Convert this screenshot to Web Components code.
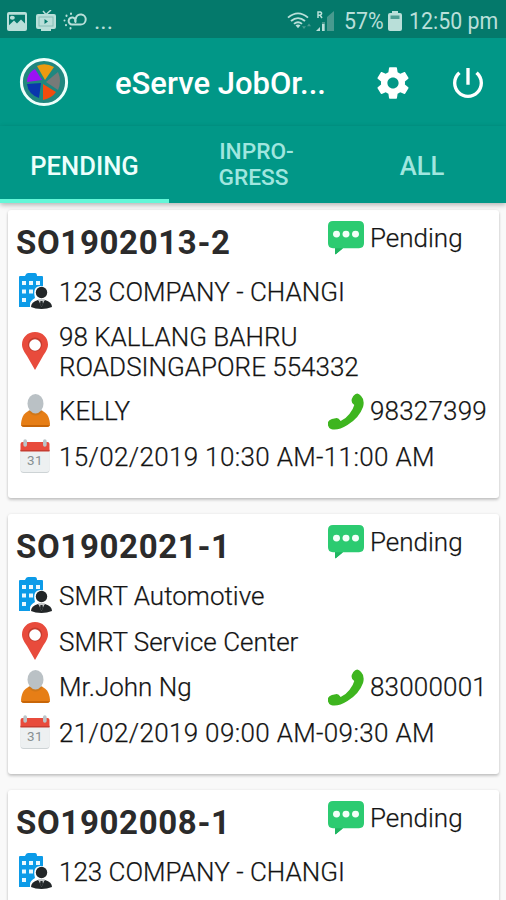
<!DOCTYPE html>
<html lang="en">
<head>
<meta charset="utf-8">
<title>eServe JobOrder</title>
<style>
html,body{margin:0;height:900px;overflow:hidden}
body{background:#f9f9f9;font-family:Roboto,"Liberation Sans",sans-serif;color:#262626}
</style>
</head>
<body>
<eserve-app></eserve-app>
<script>
const define = (name, html, setup) => customElements.define(name, class extends HTMLElement {
  connectedCallback() {
    if (this.shadowRoot) return;
    const t = document.createElement('template');
    t.innerHTML = html;
    this.attachShadow({mode: 'open'}).append(t.content.cloneNode(true));
    if (setup) setup(this);
  }
});

const ICONS = {
  picture: ['0 0 20 20', '<path fill="#b9dfd9" fill-rule="evenodd" d="M2 0H18Q20 0 20 2V18Q20 20 18 20H2Q0 20 0 18V2Q0 0 2 0ZM2 3V14L7 9L10 12L14 8L18 12V3ZM5 4A2 2 0 1 1 4.900 4Z"/><circle cx="6" cy="6" r="1.800" fill="#b9dfd9"/>'],
  tv: ['0 0 22 22', '<path d="M8 1L11 4.500L16 0" fill="none" stroke="#b9dfd9" stroke-width="1.500"/><rect x="1" y="4" width="20" height="15" rx="2" fill="#b9dfd9"/><rect x="4" y="7" width="14" height="9" fill="none" stroke="#86beb6"/><path d="M9.500 9V14L13 11.500Z" fill="#04796b"/><path d="M6 19H16V21H6Z" fill="#b9dfd9"/>'],
  weather: ['0 0 24 20', '<g fill="none" stroke="#b9dfd9" stroke-width="2" stroke-linecap="round"><path d="M9 13.500H17.500A5 5 0 1 0 12.800 7.500L12 10M9 13.500A3.500 3.500 0 1 1 12.500 11"/><path d="M8 2.500V3M3.500 4.500V5M1.500 9.500V9.600M3 14V14.200M7.500 17V17.500"/></g>'],
  wifi: ['0 0 26 20', '<g fill="none" stroke="#b9dfd9" stroke-width="1.900"><path d="M1 6Q11 -3 21 6M4 9.500Q11 3.500 18 9.500M7 12.500Q11 9 15 12.500"/></g><path d="M8.500 14L11 17L13.500 14Q11 12.300 8.500 14Z" fill="#b9dfd9"/><path d="M15 15L17 18L19 15ZM20 15L22 12L24 15Z" fill="#489a8f"/>'],
  signal: ['0 0 20 20', '<path d="M2 7V1H4.500Q7 2.500 4 4.200H2M4 4L6 7" fill="none" stroke="#b9dfd9" stroke-width="1.500"/><path d="M0 20L4 16V20Z" fill="#b9dfd9"/><path d="M6 20V11H9V20ZM11 6L18 0V20H11Z" fill="#489a8f"/><path d="M6 13H8.500V20H6Z" fill="#b9dfd9"/>'],
  battery: ['0 0 14 20', '<path d="M4 0H10V2H12Q14 2 14 4V18Q14 20 12 20H2Q0 20 0 18V4Q0 2 2 2H4Z" fill="#b9dfd9"/><path d="M2.500 4.500H11.500V8H2.500Z" fill="#4c9e93"/>'],
  logo: ['0 0 50 50', '<circle cx="25" cy="25" r="22.600" fill="#20877f" stroke="#edfffb" stroke-width="3"/><path d="M18 9Q26 5 35 10L26 23Z" fill="#ed9a11"/><path d="M16 12L23 23L8 25Q8 16 16 12Z" fill="#9b12f4"/><path d="M8 27L22 26L20 41Q9 37 8 27Z" fill="#0937ad"/><path d="M24 27L37 35Q33 41 24 43Z" fill="#f44c0e"/><path d="M27 25L39 15Q43 24 39 33Z" fill="#777a78"/>'],
  gear: ['2 1.800 20 20.400', '<path fill="#fff" d="M19.430 12.980c.04-.32.07-.64.07-.98s-.03-.66-.07-.98l2.110-1.650c.19-.15.24-.42.12-.64l-2-3.460c-.12-.22-.39-.3-.61-.22l-2.490 1c-.52-.4-1.080-.73-1.690-.98l-.38-2.650C14.460 2.180 14.250 2 14 2h-4c-.25 0-.46.18-.49.42l-.38 2.650c-.61.25-1.170.59-1.690.98l-2.490-1c-.23-.09-.49 0-.61.22l-2 3.460c-.13.22-.07.49.12.64l2.110 1.650c-.04.32-.07.65-.07.98s.03.66.07.98l-2.110 1.650c-.19.15-.24.42-.12.64l2 3.460c.12.22.39.3.61.22l2.490-1c.52.4 1.080.73 1.690.98l.38 2.650c.03.24.24.42.49.42h4c.25 0 .46-.18.49-.42l.38-2.650c.61-.25 1.170-.59 1.690-.98l2.490 1c.23.09.49 0 .61-.22l2-3.460c.12-.22.07-.49-.12-.64l-2.110-1.650zM12 15.500c-1.930 0-3.500-1.570-3.500-3.500s1.570-3.500 3.500-3.500 3.500 1.570 3.500 3.500-1.570 3.500-3.500 3.500z"/>'],
  power: ['3 3 18 18', '<path fill="#fff" d="M13 3h-2v10h2V3zm4.830 2.170l-1.420 1.420C17.990 7.860 19 9.810 19 12c0 3.870-3.130 7-7 7s-7-3.130-7-7c0-2.190 1.010-4.140 2.580-5.420L6.170 5.170C4.230 6.820 3 9.260 3 12c0 4.970 4.030 9 9 9s9-4.030 9-9c0-2.740-1.230-5.180-3.170-6.830z"/>'],
  chat: ['0 0 36 35', '<path fill="#2ccb71" d="M5 0H31Q36 0 36 5V23Q36 28 31 28H15L8 34Q7 35 7 33V28H5Q0 28 0 23V5Q0 0 5 0Z"/><path d="M7 28H15L8 34Q7 35 7 33Z" fill="#20b561"/><g fill="#f3fff8"><circle cx="8.500" cy="13.500" r="3.500"/><circle cx="18" cy="13.500" r="3.500"/><circle cx="27.500" cy="13.500" r="3.500"/></g>'],
  building: ['0 0 34 36', '<path fill="#0c9be8" d="M1 4Q1 3 2 3H7Q8 0 10 0H17Q19 0 19 3H24Q25 3 25 4V34H1Z"/><path fill="#eaf8ff" d="M4 8H8V12H4ZM11 8H15V12H11ZM18 8H22V12H18ZM4 16.500H8V20.500H4ZM11 16.500H15V20.500H11ZM4 25H8V29H4Z"/><path d="M12 36V31Q12 28 17 25Q14 13 23 13Q31 13 29 25L34 30V36Z" fill="#fff"/><circle cx="23.500" cy="19.500" r="5.700" fill="#222628"/><path d="M13 34Q13 29 20 27L23.500 30L27 27Q34 29 34 34Q29 36 23.500 36Q17 36 13 34Z" fill="#222628"/><path d="M20 26L23.500 34L27 26Z" fill="#c9cccd"/><path d="M22.500 28H24.500L25 31L23.500 34L22 31Z" fill="#222628"/>'],
  pin: ['0 0 26 38', '<path fill="#e84b3c" d="M13 0C5.500 0 0 5.500 0 12.500C0 17 3 21 5 24L13 38L21 24C23 21 26 17 26 12.500C26 5.500 20.500 0 13 0Z"/><circle cx="13" cy="12.500" r="7" fill="#c33b2d"/><circle cx="13" cy="13" r="5.800" fill="#fff"/>'],
  user: ['0 0 29 33', '<path fill="#e67e16" d="M0 30Q1 17 11 16.500H18Q28 17 29 30Q29 33 26 33H3Q0 33 0 30Z"/><path fill="#c86608" d="M0 31H29Q28 33 26 33H3Q1 33 0 31Z"/><path d="M7 17Q14.500 26 22 17Q18 15 14.500 15Q11 15 7 17Z" fill="#d07718"/><ellipse cx="14.500" cy="9.700" rx="8" ry="9.700" fill="#bac1c5"/>'],
  calendar: ['0.500 0 29 34', '<path d="M1 10H29V31Q29 34 26 34H4Q1 34 1 31Z" fill="#cdd3d5"/><path d="M1 10H29V30Q29 33 26 33H4Q1 33 1 30Z" fill="#edf0f1"/><path d="M1 12V5Q1 3 3 3H27Q29 3 29 5V12Z" fill="#e84b3c"/><path d="M1 11H29V12.500H1Z" fill="#c63c30"/><path d="M5.500 2V6M24.500 2V6" stroke="#bbc5c8" stroke-width="3.500" stroke-linecap="round"/><text x="15" y="26.500" text-anchor="middle" font-family="Roboto" font-size="13" font-weight="400" fill="#888f92">31</text>'],
  phone: ['0 0 37 37', '<path fill="#3eb51f" d="M26 3Q30 -2 34 3Q38 7 36 14Q32 25 20 32Q10 38 3 36Q-1 34 0 29Q1 27 4 26L9 25Q11 25 13 28Q18 26 22 21Q26 16 27 12Q22 9 26 3Z"/>']
};

const makeIcon = (name, width, height) => {
  const icon = document.createElement('app-icon');
  icon.setAttribute('name', name);
  icon.style.width = width + 'px';
  icon.style.height = height + 'px';
  return icon;
};

define('app-icon', '<style>:host{display:block;flex:none}svg{display:block;width:100%;height:100%}</style>', el => {
  const [box, art] = ICONS[el.getAttribute('name')];
  const holder = document.createElement('template');
  holder.innerHTML = `<svg viewBox="${box}" preserveAspectRatio="none" aria-hidden="true">${art}</svg>`;
  el.shadowRoot.append(holder.content);
});

define('status-bar', `<style>
:host{display:flex;align-items:center;height:38px;box-sizing:border-box;padding:4px 8px 0 7px;background:#04796b;color:#b9dfd9;font-size:24px;white-space:nowrap}
.more{font-size:24px;line-height:20px;margin:0 auto 0 7px}
.pct,.time{display:block;transform:scaleX(.89);transform-origin:100% 50%}
.pct{margin-left:-5px}
.time{margin-left:-4px}
</style>
<app-icon name="picture" style="width:20px;height:19px"></app-icon>
<app-icon name="tv" style="width:22px;height:22px;margin-left:8px"></app-icon>
<app-icon name="weather" style="width:24px;height:20px;margin-left:6px"></app-icon>
<span class="more">...</span>
<app-icon name="wifi" style="width:26px;height:19px"></app-icon>
<app-icon name="signal" style="width:20px;height:20px;margin:0 8px 0 3px"></app-icon>
<span class="pct">57%</span>
<app-icon name="battery" style="width:14px;height:20px;margin-left:4px"></app-icon>
<span class="time">12:50 pm</span>`);

define('app-bar', `<style>
:host{display:flex;align-items:center;height:88px;padding:0 23px 0 19px;background:#019787;box-sizing:border-box}
h1{font:500 31px/36px Roboto,sans-serif;color:#fff;margin:4px auto 0 46px;white-space:nowrap}
</style>
<app-icon name="logo" style="width:50px;height:50px"></app-icon>
<h1><slot></slot></h1>
<app-icon name="gear" style="width:32px;height:32px;margin-top:2px"></app-icon>
<app-icon name="power" style="width:30px;height:30px;margin:2px 0 0 44px"></app-icon>`);

define('tab-item', `<style>
:host{display:flex;align-items:center;justify-content:center;text-align:center;box-sizing:border-box;border-bottom:4px solid transparent;color:#a0e6df;font:500 25.600px/26px Roboto,sans-serif;padding-top:7px}
:host([small]){font-size:22.700px;padding-top:5px}
:host([active]){color:#edfffc;border-color:#64f7d8}
</style><span><slot></slot></span>`);

define('tab-strip', `<style>
:host{display:grid;grid-template-columns:169px 169px 168px;height:77px;background:#019787;box-shadow:0 2px 5px rgba(0,0,0,.28);position:relative}
</style><slot></slot>`);

define('info-row', `<style>
:host{display:flex;align-items:center;min-height:45.600px;box-sizing:border-box;padding:7px 0;font-size:26px;line-height:30px;white-space:pre}
:host([icon=calendar]){letter-spacing:.34px}
.ico{display:flex;justify-content:center;width:36px;margin:0 6px 0 1px;flex:none}
app-icon{margin:-6px 0 -4px}
.text{flex:1}
</style><div class="ico"></div><div class="text"><slot></slot></div><slot name="end"></slot>`, el => {
  const sizes = {building: [34, 36], pin: [26, 38], user: [29, 33], calendar: [30, 34]};
  const name = el.getAttribute('icon');
  el.shadowRoot.querySelector('.ico').append(makeIcon(name, ...sizes[name]));
});

define('side-label', `<style>
:host{display:flex;align-items:center;width:163px;height:30px;flex:none;font-size:26px;line-height:30px;white-space:nowrap}
:host([icon=phone]){letter-spacing:.2px}
app-icon{margin:-4px 6px -4px 0}
</style><slot></slot>`, el => {
  const name = el.getAttribute('icon');
  el.shadowRoot.insertBefore(makeIcon(name, 36, name === 'chat' ? 34 : 37), el.shadowRoot.querySelector('slot'));
});

define('job-card', `<style>
:host{display:block;background:#fff;border-radius:3px;box-shadow:0 2px 3px rgba(0,0,0,.2),0 0 3px rgba(0,0,0,.08);padding:0 8px 18.500px 8px;font-weight:300;color:#111;-webkit-text-stroke:.25px #222}
header{display:flex;justify-content:space-between;height:59px}
h2{font:700 33px/40px Roboto,sans-serif;letter-spacing:.65px;margin:13px 0 0;color:#2b2b2b;-webkit-text-stroke:0}
side-label{margin-top:13px}
</style><header><h2></h2><side-label icon="chat">Pending</side-label></header><slot></slot>`, el => {
  el.shadowRoot.querySelector('h2').textContent = el.getAttribute('order');
});

define('eserve-app', `<style>
:host{display:block;width:506px;height:900px;overflow:hidden}
main{display:flex;flex-direction:column;gap:16px;padding:7px 7px 0 8px}
.lead{padding-left:6px}
</style>
<status-bar></status-bar>
<app-bar>eServe JobOr...</app-bar>
<tab-strip><tab-item active>PENDING</tab-item><tab-item small><span class="lead">INPRO-</span><br>GRESS</tab-item><tab-item>ALL</tab-item></tab-strip>
<main>
<job-card order="SO1902013-2"><info-row icon="building">123 COMPANY - CHANGI</info-row><info-row icon="pin">98 KALLANG BAHRU<br>ROADSINGAPORE 554332</info-row><info-row icon="user">KELLY<side-label slot="end" icon="phone">98327399</side-label></info-row><info-row icon="calendar">15/02/2019 10:30 AM-11:00 AM</info-row></job-card>
<job-card order="SO1902021-1"><info-row icon="building">SMRT Automotive</info-row><info-row icon="pin">SMRT Service Center</info-row><info-row icon="user">Mr.John Ng<side-label slot="end" icon="phone">83000001</side-label></info-row><info-row icon="calendar">21/02/2019 09:00 AM-09:30 AM</info-row></job-card>
<job-card order="SO1902008-1"><info-row icon="building">123 COMPANY - CHANGI</info-row></job-card>
</main>`);
</script>
</body>
</html>
